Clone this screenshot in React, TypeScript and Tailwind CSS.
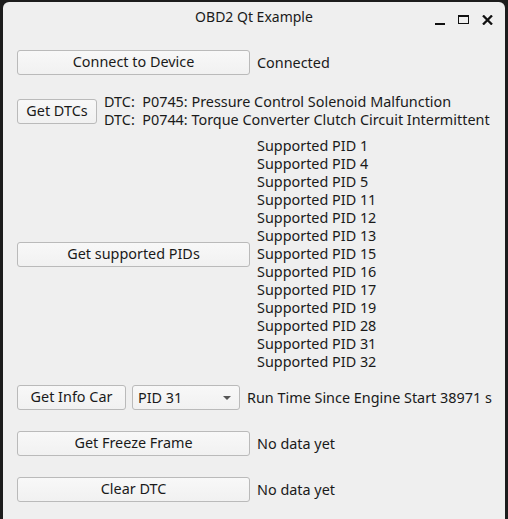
import React from "react";

const font = { fontFamily: '"Noto Sans", "Open Sans", sans-serif' };

function Btn({ w, children }: { w: string; children: React.ReactNode }) {
  return (
    <div
      className={`${w} h-[25px] shrink-0 flex items-center justify-center rounded-[3px] border border-[#bababa] bg-gradient-to-b from-[#f8f8f8] to-[#f1f1f1] text-[14.4px] text-[#1a1a1a] leading-none`}
    >
      {children}
    </div>
  );
}

const pids = [1, 4, 5, 11, 12, 13, 15, 16, 17, 19, 28, 31, 32];

export default function App() {
  return (
    <div className="w-[508px] h-[519px] bg-[#1c1c1c] pl-[3px] pr-[3px] pt-[2px] overflow-hidden" style={font}>
      <div className="h-[517px] bg-[#efefef] rounded-t-[6px] text-[#1a1a1a]">
        <div className="h-[32px] grid grid-cols-[1fr_auto_1fr] items-center">
          <div />
          <div className="text-[14px] leading-none mb-[3px]">OBD2 Qt Example</div>
          <div className="flex items-center justify-end gap-[13px] pr-[12px] pt-[3px]">
            <div className="w-[10px] h-[2px] bg-[#111] mt-[8px]" />
            <div className="w-[11px] h-[9px] border border-[#111] border-t-[2px]" />
            <svg width="11" height="10" viewBox="0 0 11 10">
              <path d="M1 0.5 L10 9.5 M10 0.5 L1 9.5" stroke="#111" strokeWidth="2.3" />
            </svg>
          </div>
        </div>

        <div className="pl-[14px] flex flex-col text-[14.4px]">
          <div className="mt-[16px] flex items-center gap-[7px]">
            <Btn w="w-[233px]">Connect to Device</Btn>
            <span>Connected</span>
          </div>

          <div className="mt-[18px] flex items-center gap-[7px]">
            <Btn w="w-[80px]">Get DTCs</Btn>
            <div className="leading-[18px] whitespace-pre">
              <div>DTC:  P0745: Pressure Control Solenoid Malfunction</div>
              <div>DTC:  P0744: Torque Converter Clutch Circuit Intermittent</div>
            </div>
          </div>

          <div className="mt-[8px] flex items-center gap-[7px]">
            <Btn w="w-[233px]">Get supported PIDs</Btn>
            <div className="leading-[18px]">
              {pids.map((p) => (
                <div key={p}>Supported PID {p}</div>
              ))}
            </div>
          </div>

          <div className="mt-[14px] flex items-center">
            <Btn w="w-[109px]">Get Info Car</Btn>
            <div className="ml-[6px] w-[108px] h-[25px] flex items-center justify-between rounded-[3px] border border-[#bababa] bg-gradient-to-b from-[#f8f8f8] to-[#f1f1f1] pl-[5px] pr-[8px]">
              <span>PID 31</span>
              <svg width="8" height="4" viewBox="0 0 8 4">
                <path d="M0 0 L8 0 L4 4 Z" fill="#555" />
              </svg>
            </div>
            <span className="ml-[7px]">Run Time Since Engine Start 38971 s</span>
          </div>

          <div className="mt-[21px] flex items-center gap-[7px]">
            <Btn w="w-[233px]">Get Freeze Frame</Btn>
            <span>No data yet</span>
          </div>

          <div className="mt-[21px] flex items-center gap-[7px]">
            <Btn w="w-[233px]">Clear DTC</Btn>
            <span>No data yet</span>
          </div>
        </div>
      </div>
    </div>
  );
}
